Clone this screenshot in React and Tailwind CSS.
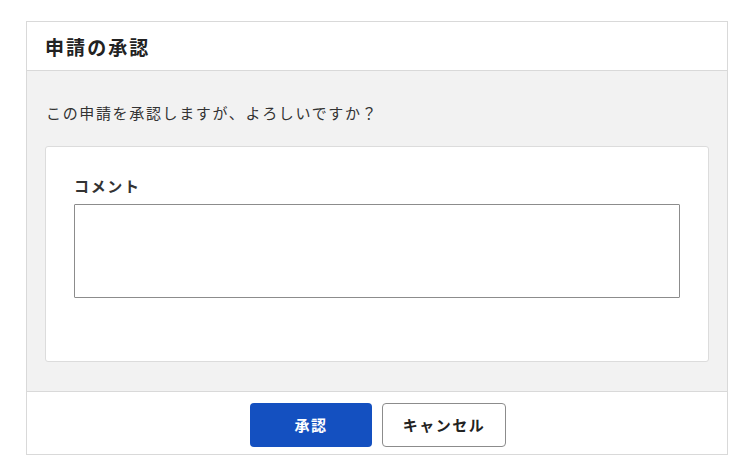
export default function App() {
    return (
        <div className="w-[750px] h-[470px] bg-white pt-[21px] pl-[26px]" style={{ fontFamily: '"Noto Sans CJK JP", "Noto Sans", sans-serif' }}>
            <div className="w-[702px] border border-[#d9d9d9] text-[#333]">
                {/* Header */}
                <div className="h-[49px] flex items-center pl-[18px] border-b border-[#d9d9d9] bg-white">
                    <h2 className="text-[19px] font-bold leading-none text-[#222] tracking-[0.11em]">申請の承認</h2>
                </div>

                {/* Body */}
                <div className="bg-[#f2f2f2] px-[18px] pt-[30px] pb-[29px]">
                    <p className="text-[15px] leading-[24px] tracking-[0.11em] text-[#333] pl-[1px]">この申請を承認しますが、よろしいですか？</p>
                    <div className="mt-[21px] h-[216px] bg-white border border-[#dcdcdc] rounded-[3px] px-[28px] pt-[27px]">
                        <label className="block text-[15px] font-bold leading-[24px] tracking-[0.11em] text-[#333]">コメント</label>
                        <textarea className="mt-[6px] block w-full h-[94px] border border-[#8c8c8c] rounded-[1px] resize-none outline-none p-2 text-sm" />
                    </div>
                </div>

                {/* Footer */}
                <div className="h-[63px] border-t border-[#d9d9d9] bg-white flex items-start justify-center gap-[10px] pt-[11px] pl-[2px]">
                    <button className="w-[122px] h-[44px] rounded-[4px] bg-[#1450c0] text-white text-[15px] font-bold tracking-[0.1em]">承認</button>
                    <button className="w-[124px] h-[44px] rounded-[4px] bg-white border border-[#8c8c8c] text-[#222] text-[15px] font-bold tracking-[0.1em]">キャンセル</button>
                </div>
            </div>
        </div>
    );
}
